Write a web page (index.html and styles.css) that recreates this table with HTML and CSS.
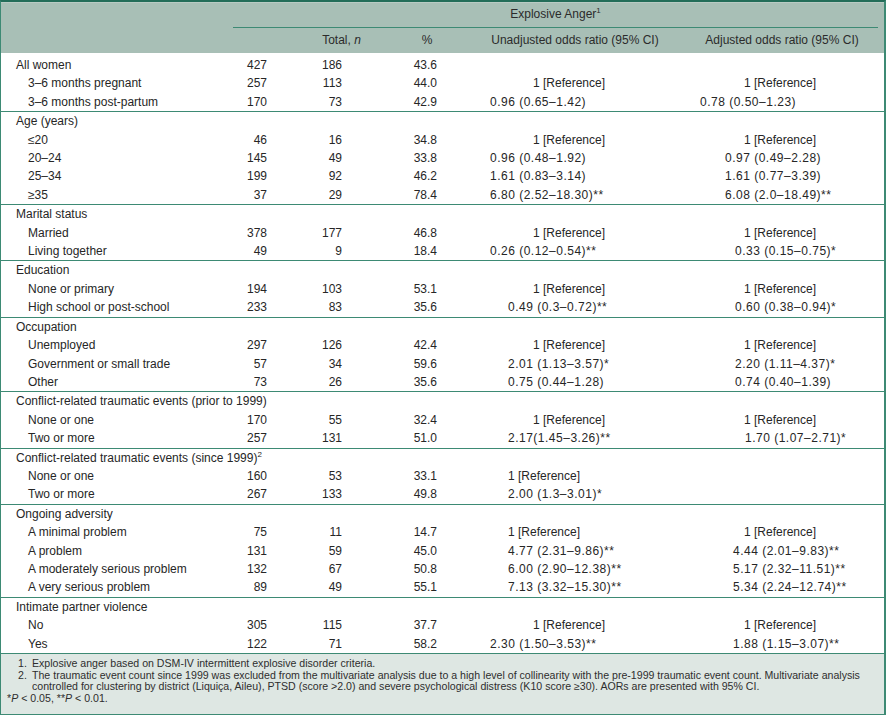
FILE: index.html
```html
<!DOCTYPE html>
<html lang="en">
<head>
<meta charset="utf-8">
<title>Explosive anger — odds ratios</title>
<link rel="stylesheet" href="styles.css">
</head>
<body>
<div class="frame">
<table class="data">
<colgroup>
<col class="c-label"><col class="c-n"><col class="c-total"><col class="c-pct"><col class="c-uor"><col class="c-aor">
</colgroup>
<thead>
<tr class="h1"><th rowspan="2"></th><th colspan="5"><div class="span-title">Explosive Anger<sup>1</sup></div></th></tr>
<tr class="h2"><th></th><th>Total, <i>n</i></th><th>%</th><th>Unadjusted odds ratio (95% CI)</th><th>Adjusted odds ratio (95% CI)</th></tr>
</thead>
<tbody class="first u-wide a0">
<tr><td class="lbl">All women</td><td>427</td><td>186</td><td>43.6</td><td></td><td></td></tr>
<tr><td class="sub">3–6 months pregnant</td><td>257</td><td>113</td><td>44.0</td><td class="ref">1 [Reference]</td><td class="ref">1 [Reference]</td></tr>
<tr><td class="sub">3–6 months post-partum</td><td>170</td><td>73</td><td>42.9</td><td>0.96 (0.65–1.42)</td><td>0.78 (0.50–1.23)</td></tr>
</tbody>
<tbody class="u-wide a1">
<tr><td class="lbl">Age (years)</td><td></td><td></td><td></td><td></td><td></td></tr>
<tr><td class="sub">≤20</td><td>46</td><td>16</td><td>34.8</td><td class="ref">1 [Reference]</td><td class="ref">1 [Reference]</td></tr>
<tr><td class="sub">20–24</td><td>145</td><td>49</td><td>33.8</td><td>0.96 (0.48–1.92)</td><td>0.97 (0.49–2.28)</td></tr>
<tr><td class="sub">25–34</td><td>199</td><td>92</td><td>46.2</td><td>1.61 (0.83–3.14)</td><td>1.61 (0.77–3.39)</td></tr>
<tr><td class="sub">≥35</td><td>37</td><td>29</td><td>78.4</td><td>6.80 (2.52–18.30)**</td><td>6.08 (2.0–18.49)**</td></tr>
</tbody>
<tbody class="u-wide a2">
<tr><td class="lbl">Marital status</td><td></td><td></td><td></td><td></td><td></td></tr>
<tr><td class="sub">Married</td><td>378</td><td>177</td><td>46.8</td><td class="ref">1 [Reference]</td><td class="ref">1 [Reference]</td></tr>
<tr><td class="sub">Living together</td><td>49</td><td>9</td><td>18.4</td><td>0.26 (0.12–0.54)**</td><td>0.33 (0.15–0.75)*</td></tr>
</tbody>
<tbody class="u-mid a2">
<tr><td class="lbl">Education</td><td></td><td></td><td></td><td></td><td></td></tr>
<tr><td class="sub">None or primary</td><td>194</td><td>103</td><td>53.1</td><td class="ref">1 [Reference]</td><td class="ref">1 [Reference]</td></tr>
<tr><td class="sub">High school or post-school</td><td>233</td><td>83</td><td>35.6</td><td>0.49 (0.3–0.72)**</td><td>0.60 (0.38–0.94)*</td></tr>
</tbody>
<tbody class="u-mid a2">
<tr><td class="lbl">Occupation</td><td></td><td></td><td></td><td></td><td></td></tr>
<tr><td class="sub">Unemployed</td><td>297</td><td>126</td><td>42.4</td><td class="ref">1 [Reference]</td><td class="ref">1 [Reference]</td></tr>
<tr><td class="sub">Government or small trade</td><td>57</td><td>34</td><td>59.6</td><td>2.01 (1.13–3.57)*</td><td>2.20 (1.11–4.37)*</td></tr>
<tr><td class="sub">Other</td><td>73</td><td>26</td><td>35.6</td><td>0.75 (0.44–1.28)</td><td>0.74 (0.40–1.39)</td></tr>
</tbody>
<tbody class="u-mid a4">
<tr><td class="lbl">Conflict-related traumatic events (prior to 1999)</td><td></td><td></td><td></td><td></td><td></td></tr>
<tr><td class="sub">None or one</td><td>170</td><td>55</td><td>32.4</td><td class="ref">1 [Reference]</td><td class="ref">1 [Reference]</td></tr>
<tr><td class="sub">Two or more</td><td>257</td><td>131</td><td>51.0</td><td>2.17(1.45–3.26)**</td><td>1.70 (1.07–2.71)*</td></tr>
</tbody>
<tbody class="u-left a4">
<tr><td class="lbl">Conflict-related traumatic events (since 1999)<sup>2</sup></td><td></td><td></td><td></td><td></td><td></td></tr>
<tr><td class="sub">None or one</td><td>160</td><td>53</td><td>33.1</td><td class="ref">1 [Reference]</td><td></td></tr>
<tr><td class="sub">Two or more</td><td>267</td><td>133</td><td>49.8</td><td>2.00 (1.3–3.01)*</td><td></td></tr>
</tbody>
<tbody class="u-left a3">
<tr><td class="lbl">Ongoing adversity</td><td></td><td></td><td></td><td></td><td></td></tr>
<tr><td class="sub">A minimal problem</td><td>75</td><td>11</td><td>14.7</td><td class="ref">1 [Reference]</td><td class="ref">1 [Reference]</td></tr>
<tr><td class="sub">A problem</td><td>131</td><td>59</td><td>45.0</td><td>4.77 (2.31–9.86)**</td><td>4.44 (2.01–9.83)**</td></tr>
<tr><td class="sub">A moderately serious problem</td><td>132</td><td>67</td><td>50.8</td><td>6.00 (2.90–12.38)**</td><td>5.17 (2.32–11.51)**</td></tr>
<tr><td class="sub">A very serious problem</td><td>89</td><td>49</td><td>55.1</td><td>7.13 (3.32–15.30)**</td><td>5.34 (2.24–12.74)**</td></tr>
</tbody>
<tbody class="u-wide a3">
<tr><td class="lbl">Intimate partner violence</td><td></td><td></td><td></td><td></td><td></td></tr>
<tr><td class="sub">No</td><td>305</td><td>115</td><td>37.7</td><td class="ref">1 [Reference]</td><td class="ref">1 [Reference]</td></tr>
<tr><td class="sub">Yes</td><td>122</td><td>71</td><td>58.2</td><td>2.30 (1.50–3.53)**</td><td>1.88 (1.15–3.07)**</td></tr>
</tbody>
</table>
<div class="notes">
<p class="note"><span class="num">1.</span><span>Explosive anger based on DSM-IV intermittent explosive disorder criteria.</span></p>
<p class="note"><span class="num">2.</span><span>The traumatic event count since 1999 was excluded from the multivariate analysis due to a high level of collinearity with the pre-1999 traumatic event count. Multivariate analysis<br>controlled for clustering by district (Liquiça, Aileu), PTSD (score &gt;2.0) and severe psychological distress (K10 score ≥30). AORs are presented with 95% CI.</span></p>
<p class="sig">*<i>P</i> &lt; 0.05, **<i>P</i> &lt; 0.01.</p>
</div>
</div>
</body>
</html>
```

FILE: styles.css
```css
html, body {
  margin: 0;
  padding: 0;
  background: #ffffff;
}

body {
  font-family: "Liberation Sans", Arial, sans-serif;
  color: #262626;
}

.frame {
  width: 886px;
  box-sizing: border-box;
  border-left: 1px solid #3d8a74;
  border-right: 2px solid #3d8a74;
  border-top: 2px solid #236d59;
  border-bottom: 1px solid #3d8a74;
}

.data {
  width: 100%;
  table-layout: fixed;
  border-collapse: separate;
  border-spacing: 0;
  font-size: 12px;
}

.c-label { width: 232px; }
.c-n { width: 66px; }
.c-total { width: 85px; }
.c-pct { width: 86px; }
.c-uor { width: 210px; }
.c-aor { width: 204px; }

thead th {
  background: #a8bfb6;
  font-weight: normal;
  color: #2b2b2b;
  padding: 0;
  white-space: nowrap;
}

.h1 th {
  height: 26px;
  box-shadow: inset 0 1px 0 #b9cbc4;
}

.span-title {
  margin-right: 6px;
  height: 25px;
  line-height: 25px;
  text-align: center;
  border-bottom: 1px solid #3d8a74;
}

.h2 th {
  height: 25px;
  line-height: 25px;
  text-align: center;
}

sup {
  font-size: 8px;
  line-height: 0;
  vertical-align: 5px;
}

tbody td {
  padding: 0;
  line-height: 18.4px;
  white-space: nowrap;
}

tbody.first tr:first-child td {
  padding-top: 3px;
}

tbody tr:last-child td {
  border-bottom: 1px solid #3d8a74;
}

td.lbl { padding-left: 15px; }
td.sub { padding-left: 27px; }

tbody td:nth-child(2) { text-align: right; padding-right: 32px; }
tbody td:nth-child(3) { text-align: right; padding-right: 42px; }
tbody td:nth-child(4) { text-align: right; padding-right: 33px; }

/* odds ratio columns: values left-aligned, reference labels inset */
tbody td:nth-child(5),
tbody td:nth-child(6) {
  text-align: left;
  letter-spacing: 0.5px;
}
tbody td.ref { letter-spacing: 0; }

.u-wide td:nth-child(5) { padding-left: 20px; }
.u-mid td:nth-child(5) { padding-left: 38px; }
.u-left td:nth-child(5) { padding-left: 38px; }
tbody td.ref:nth-child(5) { padding-left: 63px; }
.u-left td.ref:nth-child(5) { padding-left: 38px; }

.a0 td:nth-child(6) { padding-left: 20px; }
.a1 td:nth-child(6) { padding-left: 45px; }
.a2 td:nth-child(6) { padding-left: 55px; }
.a3 td:nth-child(6) { padding-left: 53px; }
.a4 td:nth-child(6) { padding-left: 65px; }
tbody td.ref:nth-child(6) { padding-left: 64px; }

.notes {
  background: #dee7e3;
  padding: 4px 0 10px;
  font-size: 10.6px;
  line-height: 11.5px;
  color: #2e2e2e;
}

.note {
  margin: 0;
  display: flex;
  padding-left: 17px;
}

.note .num {
  flex: none;
  width: 14px;
}

.sig {
  margin: 0;
  padding-left: 6px;
}
```
